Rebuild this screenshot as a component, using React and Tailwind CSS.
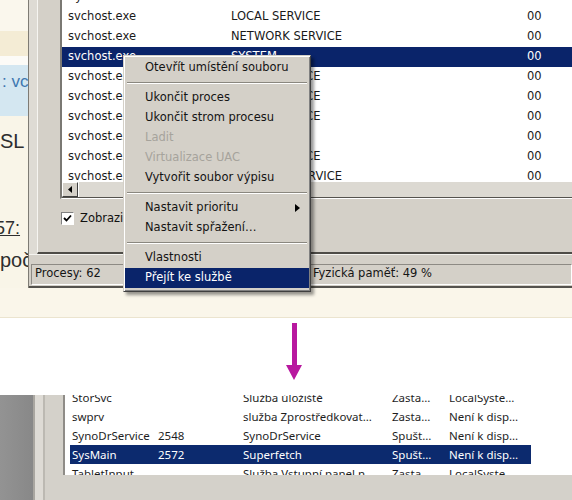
import React from "react";

const topRows = [
  ["SynoDrServiceWrk.exe", "SYSTEM", "00", false],
  ["svchost.exe", "LOCAL SERVICE", "00", false],
  ["svchost.exe", "NETWORK SERVICE", "00", false],
  ["svchost.exe", "SYSTEM", "00", true],
  ["svchost.exe", "LOCAL SERVICE", "00", false],
  ["svchost.exe", "LOCAL SERVICE", "00", false],
  ["svchost.exe", "LOCAL SERVICE", "00", false],
  ["svchost.exe", "SYSTEM", "00", false],
  ["svchost.exe", "LOCAL SERVICE", "00", false],
  ["svchost.exe", "NETWORK SERVICE", "00", false],
];

const bottomRows = [
  ["StorSvc", "", "Služba úložiště", "Zasta…", "LocalSyste…", false],
  ["swprv", "", "služba Zprostředkovat…", "Zasta…", "Není k disp…", false],
  ["SynoDrService", "2548", "SynoDrService", "Spušt…", "Není k disp…", false],
  ["SysMain", "2572", "Superfetch", "Spušt…", "Není k disp…", true],
  ["TabletInput…", "", "Služba Vstupní panel n…", "Zasta…", "LocalSyste…", false],
];

function LeftWeb() {
  return (
    <div className="w-[28px] h-[288px] flex flex-col overflow-hidden shrink-0 font-['Liberation_Sans',sans-serif]">
      <div className="h-[31px] bg-[#faf7ed]" />
      <div className="h-[25px] bg-[#f4ecd5]" />
      <div className="h-[9px] bg-[#fcfbf7]" />
      <div className="h-[51px] bg-[#d4e7f1] pl-[2px] pt-[7px] text-[17px] leading-[20px] text-[#3f77b0] whitespace-nowrap">
        :&nbsp;vc
      </div>
      <div className="flex-1 flex flex-col bg-[#f9f5e8] text-[#2e2e2e] whitespace-nowrap">
        <div className="mt-[13px] text-[20px] leading-[24px]">SL</div>
        <div className="mt-[63px] -ml-[5px] text-[18px] leading-[24px] underline">57:</div>
        <div className="mt-[8px] text-[20px] leading-[24px]">poč</div>
      </div>
    </div>
  );
}

function TopList() {
  return (
    <div className="h-[199px] flex flex-col bg-white border-l-2 border-l-[#7a7873] border-b border-b-white overflow-hidden">
      <div className="h-[182px] overflow-hidden">
        <div className="-mt-[13px] flex flex-col">
          {topRows.map((r, i) => (
            <div
              key={i}
              className={
                r[3]
                  ? "flex h-[20px] w-[640px] items-center text-[11.5px] whitespace-nowrap bg-[#0a246a] text-white"
                  : "flex h-[20px] w-[640px] items-center text-[11.5px] whitespace-nowrap text-[#1a1a1a]"
              }
            >
              <div className="w-[163px] pl-[6px] shrink-0">{r[0]}</div>
              <div className="w-[296px] pl-[6px] shrink-0">{r[1]}</div>
              <div className="pl-[6px]">{r[2]}</div>
            </div>
          ))}
        </div>
      </div>
      <div className="h-[16px] flex bg-[#e9e7e1] border-b border-b-[#55534e]">
        <div className="w-[16px] h-[15px] shrink-0 bg-[#d4d0c8] border border-t-white border-l-white border-r-[#404040] border-b-[#404040] flex items-center justify-center">
          <svg width="4" height="7" viewBox="0 0 4 7">
            <polygon points="4,0 4,7 0,3.5" fill="#000" />
          </svg>
        </div>
        <div className="flex-1 h-[15px] bg-[#dcd9d2] border-l border-l-white" />
      </div>
    </div>
  );
}

function Window() {
  return (
    <div className="w-[544px] h-[288px] flex flex-col bg-[#d4d0c8] border-l border-l-[#7e7b74] overflow-hidden font-['DejaVu_Sans',sans-serif]">
      <div className="h-[254px] flex">
        <div className="w-[8px] shrink-0 bg-[#dedbd4]" />
        <div className="flex-1 flex flex-col border-l border-l-[#f6f5f1] border-b-2 border-b-[#4e4c47] pl-[22px]">
          <TopList />
          <div className="mt-[13px] flex items-center h-[13px]">
            <div className="ml-[1px] w-[13px] h-[13px] bg-white border border-t-[#808080] border-l-[#808080] border-r-white border-b-white flex items-center justify-center">
              <svg width="9" height="9" viewBox="0 0 9 9">
                <path d="M1 4 L3.5 6.5 L8 1.5" stroke="#000" strokeWidth="1.8" fill="none" />
              </svg>
            </div>
            <div className="ml-[6px] text-[11.5px] text-[#111] whitespace-nowrap">Zobrazit procesy všech uživatelů</div>
          </div>
        </div>
      </div>
      <div className="h-[8px] border-t border-t-[#f4f3ef]" />
      <div className="h-[24px] flex items-center pl-[2px] text-[11.5px] text-[#151515] whitespace-nowrap">
        <div className="w-[130px] h-[21px] shrink-0 flex items-center pl-[3px] border border-t-[#8d8a84] border-l-[#8d8a84] border-r-white border-b-white">
          Procesy: 62
        </div>
        <div className="ml-[2px] w-[146px] h-[21px] shrink-0 border border-t-[#8d8a84] border-l-[#8d8a84] border-r-white border-b-white" />
        <div className="ml-[1px] flex-1 h-[21px] flex items-center pl-[2px] border border-t-[#8d8a84] border-l-[#8d8a84] border-r-white border-b-white">
          Fyzická paměť: 49 %
        </div>
      </div>
      <div className="h-[2px] bg-[#55534e]" />
    </div>
  );
}

function MenuItem({ children, disabled, selected, arrow }) {
  const cls = selected
    ? "h-[20px] flex items-center pl-[20px] pr-[8px] bg-[#0a246a] text-white"
    : disabled
    ? "h-[20px] flex items-center pl-[20px] pr-[8px] text-[#a6a39c]"
    : "h-[20px] flex items-center pl-[20px] pr-[8px] text-[#141414]";
  return (
    <div className={cls}>
      <span className="flex-1 whitespace-nowrap">{children}</span>
      {arrow && (
        <svg width="5" height="8" viewBox="0 0 5 8" className="mr-[1px]">
          <polygon points="0,0 5,4 0,8" fill="#000" />
        </svg>
      )}
    </div>
  );
}

function Sep() {
  return (
    <div className="h-[10px] flex items-center px-[2px]">
      <div className="flex-1 h-[2px] border-t border-t-[#8a877f] border-b border-b-white" />
    </div>
  );
}

function ContextMenu() {
  return (
    <div className="absolute left-[123px] top-[55px] w-[188px] bg-[#d4d0c8] border border-t-[#d4d0c8] border-l-[#d4d0c8] border-r-[#404040] border-b-[#404040] shadow-[inset_1px_1px_0_#ffffff,inset_-1px_-1px_0_#808080,3px_3px_3px_rgba(0,0,0,0.4)] pt-[2px] pb-[3px] px-px text-[11.5px] font-['DejaVu_Sans',sans-serif]">
      <MenuItem>Otevřít umístění souboru</MenuItem>
      <Sep />
      <MenuItem>Ukončit proces</MenuItem>
      <MenuItem>Ukončit strom procesu</MenuItem>
      <MenuItem disabled>Ladit</MenuItem>
      <MenuItem disabled>Virtualizace UAC</MenuItem>
      <MenuItem>Vytvořit soubor výpisu</MenuItem>
      <Sep />
      <MenuItem arrow>Nastavit prioritu</MenuItem>
      <MenuItem>Nastavit spřažení…</MenuItem>
      <Sep />
      <MenuItem>Vlastnosti</MenuItem>
      <MenuItem selected>Přejít ke službě</MenuItem>
    </div>
  );
}

function BottomShot() {
  return (
    <div className="h-[105px] flex font-['Noto_Sans',sans-serif]">
      <div className="w-[33px] shrink-0 bg-[linear-gradient(90deg,#939393,#888888)]" />
      <div className="w-[2px] shrink-0 bg-[#a9a6a0]" />
      <div className="w-[8px] shrink-0 bg-[#dedbd5]" />
      <div className="w-[2px] shrink-0 bg-[#bcb9b2]" />
      <div className="flex-1 flex flex-col bg-[#d4d1ca] pl-[18px]">
        <div className="h-[80px] bg-white border-l-2 border-l-[#8f8c87] overflow-hidden">
          <div className="-mt-[7px] ml-[5px] flex flex-col">
            {bottomRows.map((r, i) => (
              <div
                key={i}
                className={
                  r[5]
                    ? "flex h-[19px] w-[461px] items-center text-[11.5px] whitespace-nowrap bg-[#0c2a6e] text-white"
                    : "flex h-[19px] w-[461px] items-center text-[11.5px] whitespace-nowrap text-[#1e1e1e]"
                }
              >
                <div className="w-[86px] pl-[2px] shrink-0">{r[0]}</div>
                <div className="w-[85px] pl-[2px] shrink-0">{r[1]}</div>
                <div className="w-[149px] pl-[2px] shrink-0">{r[2]}</div>
                <div className="w-[57px] pl-[2px] shrink-0">{r[3]}</div>
                <div className="w-[84px] pl-[2px] shrink-0">{r[4]}</div>
              </div>
            ))}
          </div>
        </div>
      </div>
    </div>
  );
}

export default function App() {
  return (
    <div className="w-[572px] h-[500px] overflow-hidden flex flex-col bg-white">
      <div className="relative h-[318px] shrink-0 flex flex-col bg-[#faf6ea] border-b border-b-[#ebe4cf]">
        <div className="flex h-[288px]">
          <LeftWeb />
          <Window />
        </div>
        <ContextMenu />
      </div>
      <div className="h-[77px] shrink-0 pl-[286px] pt-[5px]">
        <svg width="16" height="57" viewBox="0 0 16 57">
          <rect x="6" y="0" width="5" height="44" fill="#b8189f" />
          <polygon points="0,42 16,42 8,57" fill="#b8189f" />
        </svg>
      </div>
      <BottomShot />
    </div>
  );
}
